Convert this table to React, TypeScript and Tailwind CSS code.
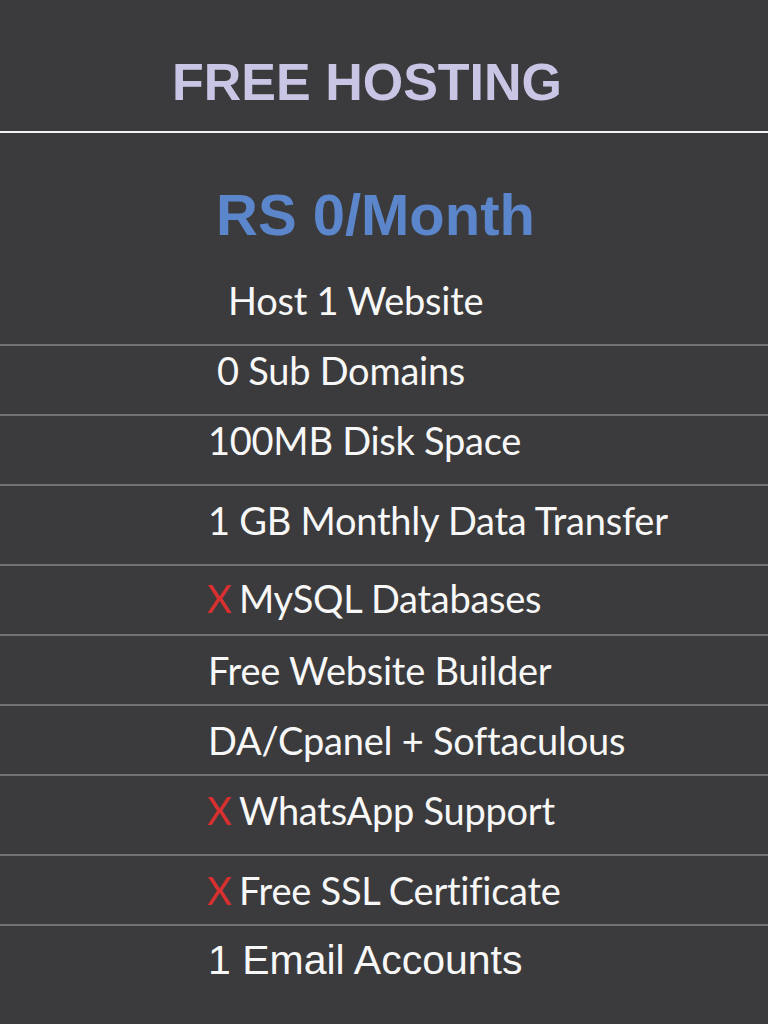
import React from 'react';

interface Feature {
    label: string;
    crossed?: boolean;
    height: string;
    pad: string;
    indent: string;
    arial?: boolean;
}

const features: Feature[] = [
    { label: '0 Sub Domains', height: 'h-[70px]', pad: 'pt-[5px]', indent: 'pl-[217px]' },
    { label: '100MB Disk Space', height: 'h-[70px]', pad: 'pt-[5px]', indent: 'pl-[208px]' },
    { label: '1 GB Monthly Data Transfer', height: 'h-[80px]', pad: 'pt-[15px]', indent: 'pl-[208px]' },
    { label: 'MySQL Databases', crossed: true, height: 'h-[70px]', pad: 'pt-[13px]', indent: 'pl-[207px]' },
    { label: 'Free Website Builder', height: 'h-[70px]', pad: 'pt-[15px]', indent: 'pl-[208px]' },
    { label: 'DA/Cpanel + Softaculous', height: 'h-[70px]', pad: 'pt-[15px]', indent: 'pl-[208px]' },
    { label: 'WhatsApp Support', crossed: true, height: 'h-[80px]', pad: 'pt-[15px]', indent: 'pl-[207px]' },
    { label: 'Free SSL Certificate', crossed: true, height: 'h-[70px]', pad: 'pt-[15px]', indent: 'pl-[207px]' },
    { label: '1 Email Accounts', arial: true, height: 'h-[100px]', pad: 'pt-[14px]', indent: 'pl-[208px]' },
];

const FeatureRow: React.FC<{ item: Feature }> = ({ item }) => (
    <div className={`${item.height} ${item.pad} ${item.indent} border-t-2 border-[#727272]`}>
        {item.arial ? (
            <p className="font-['Liberation_Sans',Arial,sans-serif] text-[41px] leading-none text-[#f7f7f7] whitespace-nowrap">
                {item.label}
            </p>
        ) : (
            <p className="font-['Lato',sans-serif] text-[38px] leading-none tracking-[-0.25px] text-[#f7f7f7] whitespace-nowrap">
                {item.crossed && (
                    <span className="inline-block w-[32px] text-[#d9302f]">X</span>
                )}
                {item.label}
            </p>
        )}
    </div>
);

const App: React.FC = () => {
    return (
        <div className="min-h-screen w-full bg-[#3b3b3d] overflow-hidden">
            {/* Plan title */}
            <div className="h-[131px] pt-[56px] pl-[172px]">
                <h1 className="font-['Liberation_Sans',Arial,sans-serif] font-bold text-[52px] leading-none text-[#c9c5e5] whitespace-nowrap">
                    FREE HOSTING
                </h1>
            </div>
            <div className="h-[2px] bg-[#f2f2f2]"></div>

            {/* Price */}
            <div className="h-[211px] pt-[53px] pl-[216px]">
                <p className="font-['Liberation_Sans',Arial,sans-serif] font-bold text-[58px] leading-none text-[#5b86cb] whitespace-nowrap">
                    RS 0/Month
                </p>
                <p className="mt-[37px] pl-[12px] font-['Lato',sans-serif] text-[38px] leading-none tracking-[-0.25px] text-[#f7f7f7] whitespace-nowrap">
                    Host 1 Website
                </p>
            </div>

            {/* Features */}
            {features.map((item, idx) => (
                <FeatureRow key={idx} item={item} />
            ))}
        </div>
    );
};

export default App;
